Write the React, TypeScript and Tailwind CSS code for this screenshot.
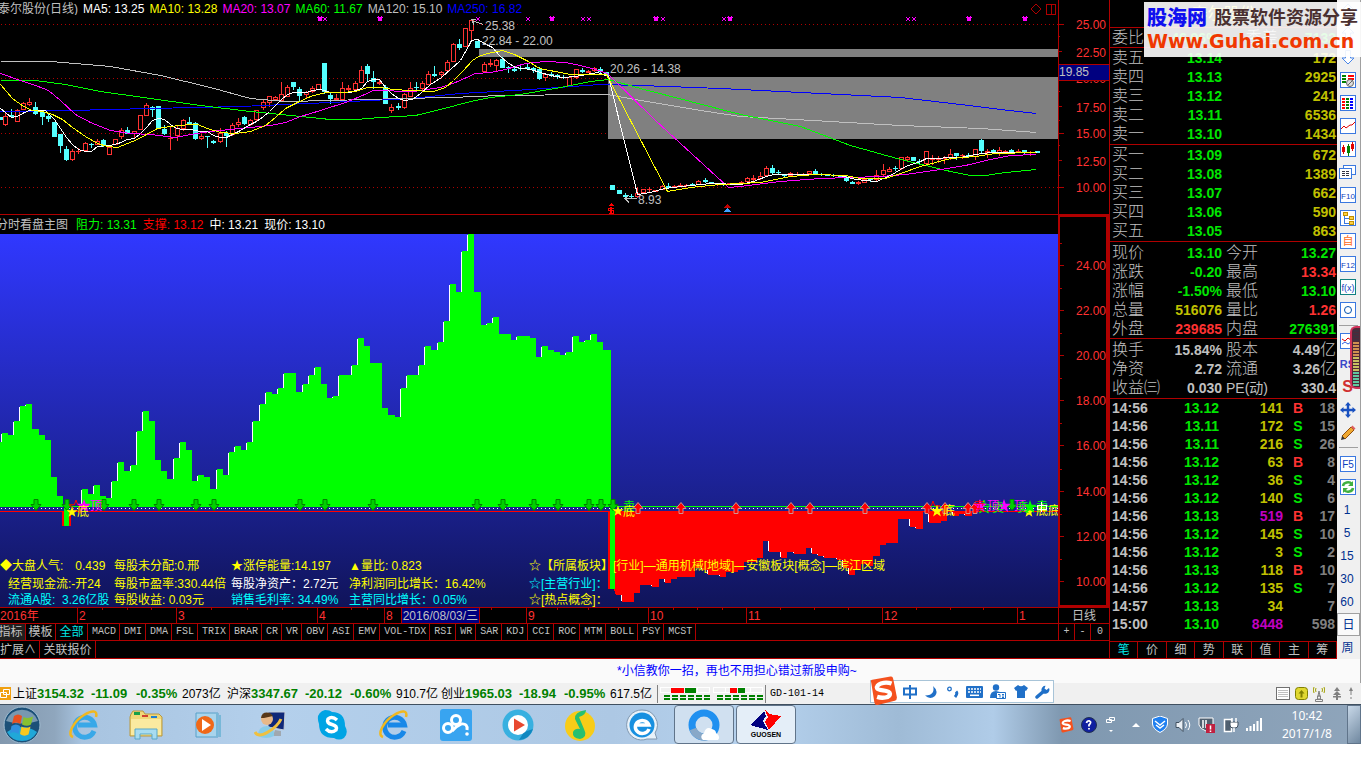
import React, { useState } from 'react';

type Candle = [x: number, up: 0 | 1, top: number, bottom: number, high: number, low: number];

const CANDLES: Candle[] = [
  [0, 0, 117, 120, 117, 120], [5, 1, 116, 125, 113, 126], [11, 0, 115, 117, 109, 118], [17, 1, 110, 122, 109, 122],
  [23, 1, 103, 110, 102, 110], [29, 1, 102, 105, 98, 106], [35, 0, 107, 114, 102, 115], [42, 0, 112, 117, 110, 125],
  [48, 0, 116, 119, 113, 122], [54, 0, 122, 137, 122, 137], [60, 0, 134, 146, 134, 153], [66, 0, 149, 160, 146, 161],
  [72, 1, 151, 160, 149, 161], [78, 1, 151, 152, 148, 154], [85, 1, 143, 151, 142, 151], [91, 0, 144, 145, 143, 148],
  [97, 1, 141, 145, 139, 145], [103, 0, 140, 146, 139, 147], [109, 1, 147, 155, 147, 155], [115, 1, 139, 145, 139, 145],
  [121, 1, 130, 137, 128, 139], [127, 0, 130, 134, 127, 134], [134, 1, 131, 134, 131, 138], [140, 1, 115, 130, 115, 130],
  [146, 1, 105, 116, 103, 116], [152, 0, 107, 110, 106, 117], [158, 0, 106, 129, 106, 129], [164, 0, 129, 134, 125, 135],
  [170, 1, 138, 139, 127, 150], [177, 1, 128, 136, 126, 141], [183, 1, 120, 129, 119, 131], [189, 0, 122, 124, 117, 124],
  [195, 0, 123, 139, 122, 140], [201, 1, 136, 139, 134, 140], [207, 0, 136, 137, 136, 148], [213, 0, 141, 143, 140, 144],
  [220, 1, 133, 142, 128, 143], [226, 0, 133, 136, 131, 147], [232, 1, 125, 135, 123, 136], [238, 1, 122, 125, 118, 127],
  [244, 0, 117, 124, 116, 125], [250, 1, 120, 125, 119, 126], [256, 1, 110, 120, 110, 121], [263, 1, 102, 108, 99, 110],
  [269, 1, 96, 103, 96, 107], [275, 1, 97, 100, 96, 101], [281, 1, 94, 101, 82, 101], [287, 1, 87, 97, 85, 97],
  [293, 0, 82, 87, 82, 90], [299, 0, 89, 96, 87, 101], [306, 1, 92, 95, 91, 98], [312, 1, 88, 92, 86, 93],
  [318, 1, 84, 90, 84, 90], [324, 0, 63, 92, 63, 94], [330, 0, 95, 99, 92, 104], [336, 1, 98, 100, 94, 101],
  [342, 1, 88, 100, 82, 101], [348, 1, 88, 90, 85, 91], [355, 1, 83, 90, 81, 91], [361, 1, 70, 83, 66, 83],
  [367, 0, 66, 74, 64, 82], [373, 0, 78, 82, 71, 89], [379, 1, 82, 84, 79, 85], [385, 0, 87, 104, 85, 104],
  [391, 1, 107, 111, 104, 113], [398, 0, 106, 108, 103, 110], [404, 1, 94, 108, 93, 109], [410, 1, 88, 97, 82, 97],
  [416, 0, 87, 88, 82, 90], [422, 1, 83, 89, 81, 90], [428, 1, 74, 85, 71, 85], [434, 0, 74, 76, 66, 77],
  [441, 1, 72, 75, 71, 77], [447, 1, 62, 71, 60, 71], [453, 1, 44, 62, 43, 62], [459, 0, 44, 48, 39, 50],
  [465, 1, 28, 47, 28, 47], [471, 1, 20, 31, 19, 41], [477, 0, 41, 48, 41, 48], [484, 1, 64, 72, 62, 72],
  [490, 1, 63, 65, 59, 67], [496, 1, 60, 66, 59, 71], [502, 0, 59, 68, 57, 68], [508, 0, 67, 68, 66, 73],
  [514, 0, 69, 71, 66, 72], [520, 0, 68, 69, 66, 71], [527, 0, 67, 69, 64, 70], [533, 0, 68, 70, 67, 73],
  [539, 0, 69, 79, 67, 80], [545, 1, 74, 78, 73, 81], [551, 0, 74, 76, 72, 77], [557, 0, 75, 77, 74, 79],
  [563, 0, 77, 78, 75, 79], [569, 1, 77, 86, 76, 86], [576, 1, 69, 78, 69, 79], [582, 0, 70, 72, 68, 73],
  [588, 1, 71, 73, 70, 73], [594, 1, 68, 71, 67, 72], [600, 0, 69, 72, 67, 73], [606, 0, 72, 76, 72, 76],
  [612, 0, 185, 190, 185, 190], [619, 0, 190, 194, 190, 194], [625, 0, 195, 197, 193, 199], [631, 0, 196, 197, 194, 198],
  [637, 1, 193, 197, 187, 198], [643, 1, 189, 193, 189, 193], [649, 1, 189, 190, 187, 192], [655, 1, 190, 192, 190, 192],
  [662, 1, 186, 190, 185, 190], [668, 0, 186, 188, 183, 189], [674, 1, 186, 187, 185, 188], [680, 1, 185, 187, 183, 187],
  [686, 1, 185, 186, 184, 187], [692, 0, 184, 185, 183, 186], [698, 1, 181, 185, 180, 185], [705, 0, 180, 182, 178, 183],
  [711, 0, 182, 184, 182, 184], [717, 1, 184, 185, 183, 186], [723, 0, 184, 185, 183, 186], [729, 1, 183, 185, 183, 185],
  [735, 1, 183, 184, 183, 185], [741, 1, 182, 183, 181, 184], [747, 1, 178, 182, 177, 182], [753, 1, 178, 180, 175, 181],
  [760, 1, 176, 179, 172, 180], [766, 1, 168, 176, 166, 177], [772, 0, 168, 173, 165, 174], [778, 0, 172, 173, 170, 175],
  [784, 0, 175, 176, 174, 177], [790, 1, 173, 176, 172, 177], [797, 1, 174, 175, 172, 176], [803, 1, 174, 175, 173, 176],
  [809, 1, 171, 174, 171, 175], [815, 0, 171, 174, 169, 174], [821, 0, 174, 175, 173, 176], [827, 0, 175, 176, 174, 176],
  [833, 0, 175, 176, 174, 177], [840, 0, 176, 177, 175, 178], [846, 0, 177, 181, 176, 182], [852, 0, 182, 184, 181, 184],
  [858, 1, 182, 184, 181, 185], [864, 1, 179, 183, 178, 183], [870, 0, 179, 180, 178, 182], [876, 1, 175, 180, 170, 181],
  [883, 1, 170, 175, 164, 176], [889, 1, 169, 172, 167, 172], [895, 0, 168, 169, 166, 171], [901, 1, 157, 169, 157, 170],
  [907, 1, 157, 160, 156, 162], [913, 0, 157, 161, 157, 161], [919, 0, 161, 162, 159, 165], [926, 1, 151, 164, 151, 166],
  [932, 1, 159, 160, 155, 165], [938, 1, 159, 160, 156, 163], [944, 1, 158, 159, 156, 164], [950, 1, 154, 158, 149, 160],
  [956, 0, 153, 156, 153, 160], [962, 1, 155, 156, 154, 159], [968, 0, 155, 156, 153, 158], [975, 1, 149, 157, 149, 160],
  [981, 0, 140, 151, 139, 154], [987, 1, 151, 153, 149, 158], [993, 0, 150, 152, 149, 154], [999, 1, 150, 153, 147, 156],
  [1005, 1, 151, 152, 150, 154], [1011, 0, 150, 152, 149, 153], [1018, 1, 151, 152, 149, 153], [1024, 0, 150, 152, 150, 154],
  [1030, 1, 152, 153, 151, 156], [1037, 0, 151, 153, 151, 153],
];

const MA_LINES = [
  { color: '#0000ff', points: '0,111 70,110 150,108 240,106 330,102 410,98 460,93 530,89 600,84 640,85 720,88 800,92 900,97 960,104 1000,109 1036,113' },
  { color: '#c0c0c0', points: '0,61 50,61 110,66 160,75 210,87 250,98 285,101 330,100 400,98 450,97 500,95 590,94 607,94 640,100 700,110 740,116 830,121 900,125 980,128 1036,132' },
  { color: '#00ff00', points: '0,80 35,80 65,84 100,91 150,98 200,105 250,111 300,116 330,119 355,119 380,117 415,115 440,109 470,101 490,97 520,94 560,87 590,81 608,79 640,88 690,101 740,114 800,126 850,145 900,159 950,171 970,175 985,175 1005,172 1036,169' },
  { color: '#ff00ff', points: '0,73 20,80 35,85 48,90 60,100 75,114 90,122 110,130 130,133 150,134 175,137 190,134 210,131 240,128 270,125 285,122 300,116 320,110 345,102 362,95 373,90 413,91 440,87 455,82 475,73 490,72 505,69 525,63 545,61 565,62 580,65 595,69 607,73 655,120 728,187 740,186 780,181 820,178 880,176 905,174 940,169 965,165 990,159 1010,155 1036,154' },
  { color: '#ffffff', points: '0,108 11,117 17,116 24,112 29,110 45,110 54,119 60,128 66,137 72,144 78,149 85,151 91,151 97,146 109,145 118,143 127,139 134,138 140,133 146,127 152,120 158,118 164,119 170,124 176,128 183,129 190,129 200,131 207,131 213,135 220,137 226,137 232,134 240,130 250,124 256,121 263,116 269,111 275,105 281,99 287,94 293,92 306,92 312,90 320,89 330,92 350,92 361,88 367,81 373,79 379,79 385,87 391,93 398,98 404,100 412,99 420,93 430,84 441,77 450,69 460,60 468,46 471,40 477,39 484,43 492,47 500,56 507,62 515,67 530,69 540,72 550,75 562,77 575,76 586,74 597,72 608,76 618,117 637,194 650,192 664,188 690,185 711,183 740,184 753,181 766,176 773,174 820,174 840,175 855,179 876,181 890,175 905,166 920,161 926,158 960,157 975,154 990,152 1036,152' },
  { color: '#ffff00', points: '0,84 12,98 23,106 32,110 42,111 52,114 62,119 72,127 85,136 97,143 107,146 117,147 127,143 137,139 146,134 157,128 170,126 190,124 197,124 207,128 220,132 235,133 250,131 265,125 275,117 285,108 297,102 310,96 325,92 340,92 355,91 367,87 380,87 393,89 410,90 433,91 445,87 453,80 462,71 472,60 478,56 487,53 502,50 514,54 528,61 539,68 570,74 606,74 667,191 690,187 720,184 760,182 790,176 815,174 845,175 860,178 885,178 900,173 920,166 935,162 950,158 975,156 995,153 1036,152' },
];

const MARKS: [number, 0 | 1][] = [
  [320, 1], [325, 0], [380, 1], [478, 0], [528, 0], [552, 1], [583, 0], [589, 0], [656, 1],
  [663, 0], [724, 0], [730, 1], [908, 0], [914, 0], [969, 1], [1025, 1],
];

// the lower pane shows the same closes on a larger price scale
const SPLIT_X = 611;
const steps = CANDLES.map(([x, up, top, bottom], i) => {
  const close = up ? top : bottom;
  const next = CANDLES[i + 1];
  return {
    from: Math.max(0, x - 3),
    to: next ? next[0] - 3 : x + 3,
    y: Math.round(242.4 + (close - 24) * 2.076),
  };
});

const GREEN_ARROWS = [36, 67, 104, 134, 159, 196, 214, 300, 325, 373, 477, 503, 534, 558, 589, 601, 613, 1012];
const RED_ARROWS = [638, 681, 736, 791, 810, 865, 927, 945, 968, 975];

const INDICATORS = ['MACD', 'DMI', 'DMA', 'FSL', 'TRIX', 'BRAR', 'CR', 'VR', 'OBV', 'ASI', 'EMV', 'VOL-TDX', 'RSI', 'WR', 'SAR', 'KDJ', 'CCI', 'ROC', 'MTM', 'BOLL', 'PSY', 'MCST'];

const SELLS = [['卖五', '13.14', '172'], ['卖四', '13.13', '2925'], ['卖三', '13.12', '241'], ['卖二', '13.11', '6536'], ['卖一', '13.10', '1434']];
const BUYS = [['买一', '13.09', '672'], ['买二', '13.08', '1389'], ['买三', '13.07', '662'], ['买四', '13.06', '590'], ['买五', '13.05', '863']];

const GREEN = 'text-[#00e600]';
const RED = 'text-[#ff3232]';
const GOLD = 'text-[#c0c000]';
const GREY = 'text-[#c0c0c0]';

const QUOTES = [
  ['现价', '13.10', GREEN, '今开', '13.27', GREEN],
  ['涨跌', '-0.20', GREEN, '最高', '13.34', RED],
  ['涨幅', '-1.50%', GREEN, '最低', '13.10', GREEN],
  ['总量', '516076', GOLD, '量比', '1.26', RED],
  ['外盘', '239685', RED, '内盘', '276391', GREEN],
];
const FUNDAMENTALS = [
  ['换手', '15.84%', GREY, '股本', '4.49亿', GREY],
  ['净资', '2.72', GREY, '流通', '3.26亿', GREY],
  ['收益㈢', '0.030', GREY, 'PE(动)', '330.4', GREY],
];
const TICKS = [
  ['14:56', '13.12', '141', 'B', '18'], ['14:56', '13.11', '172', 'S', '15'], ['14:56', '13.11', '216', 'S', '26'],
  ['14:56', '13.12', '63', 'B', '8'], ['14:56', '13.12', '36', 'S', '4'], ['14:56', '13.12', '140', 'S', '6'],
  ['14:56', '13.13', '519', 'B', '17'], ['14:56', '13.12', '145', 'S', '10'], ['14:56', '13.12', '3', 'S', '2'],
  ['14:56', '13.13', '118', 'B', '10'], ['14:56', '13.12', '135', 'S', '7'], ['14:57', '13.13', '34', '', '7'],
  ['15:00', '13.10', '8448', '', '598'],
];

const INDEXES = [
  ['上证', '3154.32', '-11.09', '-0.35%', '2073亿'],
  ['沪深', '3347.67', '-20.12', '-0.60%', '910.7亿'],
  ['创业', '1965.03', '-18.94', '-0.95%', '617.5亿'],
];

const STAR = 'M0 -7 L1.7 -2.2 L7 -2.2 L2.8 1 L4.3 6 L0 3 L-4.3 6 L-2.8 1 L-7 -2.2 L-1.7 -2.2 Z';

const KlineChart: React.FC = () => (
  <svg className="block h-[199px] w-full" viewBox="0 15 1058 199" preserveAspectRatio="xMinYMin slice" shapeRendering="crispEdges">
    <rect x="479" y="49" width="579" height="8" fill="#808080" />
    {[24, 78, 133, 187].map((y) => (
      <line key={y} x1="1" x2="1058" y1={y + 0.5} y2={y + 0.5} stroke="#b00000" strokeDasharray="1 3" />
    ))}
    <rect x="608" y="77" width="450" height="62" fill="#808080" />
    {CANDLES.map(([x, up, top, bottom, high, low]) => (
      <g key={x}>
        <rect x={x} y={high} width="1" height={low - high} fill={up ? '#ff3232' : '#54ffff'} />
        {up && bottom - top > 2 ? (
          <rect x={x - 1.5} y={top + 0.5} width="4" height={bottom - top - 1} fill="#000" stroke="#ff3232" />
        ) : (
          <rect x={x - 2} y={top} width="5" height={bottom - top} fill={up ? '#ff3232' : '#54ffff'} />
        )}
      </g>
    ))}
    {MA_LINES.map((line) => (
      <polyline key={line.color} points={line.points} fill="none" stroke={line.color} transform="translate(.5 .5)" />
    ))}
    {MARKS.map(([x, big]) => (
      <g key={x} stroke="#ff00ff">
        <path d={`M${x - 2} 17 l4 4 M${x + 2} 17 l-4 4`} strokeWidth={big ? 2 : 1} />
      </g>
    ))}
    <g fill="none" stroke="#c0c0c0">
      <path d="M483 24.5 L472 20.5 M476 19.5 h-5 M472 20 l2 5" />
      <path d="M637 198.5 H625.5 M629 195 l-4 3.5 l4 4" />
    </g>
    <g fill="#c0c0c0" className="font-['Liberation_Sans',sans-serif] text-[12px]">
      <text x="485" y="30">25.38</text>
      <text x="482" y="45">22.84 - 22.00</text>
      <text x="610" y="73">20.26 - 14.38</text>
      <text x="638" y="204">8.93</text>
    </g>
    <path d="M611 203 l3 3 h-6 z" fill="#f00" />
    <path d="M613.5 208.500 h-5 v2 h5 v3 h-5 M611 207 v7" fill="none" stroke="#f00" strokeWidth="1.500" />
    <path d="M727.500 204 l4 4 h-8 z" fill="#c00000" />
    <path d="M727.500 208 l4 4 h-8 z" fill="#3fa0ff" />
  </svg>
);

const KlineAxis: React.FC = () => (
  <svg className="block h-[214px] w-[50px]" viewBox="1059 0 50 214" shapeRendering="crispEdges">
    {[24, 51, 106, 133, 160, 187].map((y) => (
      <rect key={y} x="1059" y={y} width={y === 24 || y === 133 || y === 187 ? 5 : 3} height="1" fill="#b00000" />
    ))}
    {[36, 91, 120, 145, 175].map((y) => (
      <rect key={y} x="1059" y={y} width="1" height="1" fill="#b00000" />
    ))}
    <g fill="#ff3232" textAnchor="end" className="font-['Liberation_Sans',sans-serif] text-[12px]">
      <text x="1106" y="29">25.00</text>
      <text x="1106" y="57">22.50</text>
      <text x="1106" y="83">20.00</text>
      <text x="1106" y="112">17.50</text>
      <text x="1106" y="138">15.00</text>
      <text x="1106" y="166">12.50</text>
      <text x="1106" y="192">10.00</text>
    </g>
    <rect x="1059" y="64" width="50" height="17" fill="#b00000" />
    <rect x="1059" y="65" width="50" height="15" fill="#000080" />
    <text x="1059" y="76" fill="#c0c0c0" className="font-['Liberation_Sans',sans-serif] text-[12px]">19.85</text>
  </svg>
);

const ValueChart: React.FC = () => {
  const left = steps.filter((s) => s.to < SPLIT_X);
  const right = steps.filter((s) => s.from > SPLIT_X && s.to < 984);
  const greenTop = left.map((s) => `L${s.from} ${Math.min(s.y, 507)} L${s.to} ${Math.min(s.y, 507)}`).join(' ');
  const redEdge = right.map((s) => `L${s.from} ${Math.max(s.y, 511)} L${s.to} ${Math.max(s.y, 511)}`).join(' ');
  return (
    <svg className="block h-[373px] w-full" viewBox="0 234 1058 373" preserveAspectRatio="xMinYMin slice" shapeRendering="crispEdges">
      <defs>
        <linearGradient id="pane" x1="0" y1="0" x2="0" y2="1">
          <stop offset="0" stopColor="#3038ff" />
          <stop offset=".7" stopColor="#1b2190" />
          <stop offset="1" stopColor="#10145a" />
        </linearGradient>
      </defs>
      <rect y="234" width="1058" height="373" fill="url(#pane)" />
      <path d={`M0 507 ${greenTop} L609 350 H611 V507 Z`} fill="#fff" transform="translate(-1 1)" />
      <path d={`M0 507 ${greenTop} L609 350 H611 V507 Z`} fill="#00ff00" />
      <path d={`M616 511 ${redEdge} L984 511 Z`} fill="#fff" transform="translate(-1 -1)" />
      <path d={`M608 511 V589 H614 ${redEdge} L984 511 Z`} fill="#ff0000" />
      <rect y="507" width="1058" height="4" fill="#1b2190" />
      <rect y="511" width="1058" height="1" fill="#f00" />
      <line x1="1" x2="1058" y1="508.5" y2="508.5" stroke="#fff" strokeDasharray="1 3" />
      <rect x="611" y="506" width="447" height="1" fill="#00ff00" />
      <rect x="610" y="506" width="5" height="83" fill="#00ff00" />
      <rect x="62" y="511" width="9" height="15" fill="#f00" />
      <rect x="64" y="506" width="5" height="20" fill="#00ff00" />
      {GREEN_ARROWS.map((x) => (
        <path key={x} d={`M${x - 2} 499.5 h4 v5 h3 l-5 6 l-5 -6 h3 z`} fill="#00d000" stroke="#008000" shapeRendering="auto" />
      ))}
      {RED_ARROWS.map((x) => (
        <path key={x} d={`M${x - 2} 513.5 h4 v-5 h3 l-5 -6 l-5 6 h3 z`} fill="#f00" stroke="#d09090" shapeRendering="auto" />
      ))}
      <g shapeRendering="auto">
        <path d={STAR} transform="translate(76 507)" fill="none" stroke="#f00" />
        <path d={STAR} transform="translate(84 506)" fill="#f0f" />
        <path d={STAR} transform="translate(72 512) scale(.8)" fill="#ff0" />
        <path d={STAR} transform="translate(618 511) scale(.8)" fill="#ff0" />
        <path d={STAR} transform="translate(933 508)" fill="none" stroke="#f00" />
        <path d={STAR} transform="translate(937 511) scale(.9)" fill="#ff0" />
        <path d={STAR} transform="translate(984 507)" fill="none" stroke="#0f0" />
        <path d={STAR} transform="translate(980 506)" fill="#f0f" />
        <path d={STAR} transform="translate(1004 506)" fill="#f0f" />
        <path d={STAR} transform="translate(1029 512) scale(.8)" fill="#ff0" />
        <path d={STAR} transform="translate(1030 507)" fill="#0f0" />
      </g>
      <g className="font-['Liberation_Sans','Noto_Sans_CJK_SC',sans-serif] text-[12px]">
        <text x="90" y="510" fill="#f0f">顶</text>
        <text x="77" y="516" fill="#ff0">底</text>
        <text x="623" y="511" fill="#0f0">卖</text>
        <text x="623" y="516" fill="#ff0">底</text>
        <text x="943" y="515" fill="#ff0">底</text>
        <text x="973" y="511" fill="#f00">卖</text>
        <text x="992" y="512" fill="#0f0">卖</text>
        <text x="987" y="510" fill="#f0f">顶</text>
        <text x="1014" y="510" fill="#f0f">顶</text>
        <text x="1017" y="512" fill="#0f0">卖</text>
        <text x="1036" y="511" fill="#0f0">卖</text>
        <text x="1036" y="515" fill="#ff0">底</text>
        <text x="1048" y="515" fill="#ff0">底</text>
      </g>
      <path d="M1041.5 502 v10 M1037 505.500 h9 v4 h-9 z" fill="none" stroke="#fff" />
    </svg>
  );
};

const ValueAxis: React.FC = () => (
  <svg className="block h-[388px] w-[46px]" viewBox="1061 217 46 388" shapeRendering="crispEdges">
    {[24, 22, 20, 18, 16, 14, 12, 10].map((v, i) => {
      const y = Math.round(265 + i * 45.1);
      return (
        <g key={v} fill="#ff3232">
          <rect x="1061" y={y} width="4" height="1" fill="#b00000" />
          <rect x="1061" y={y - 22} width="2" height="1" fill="#b00000" />
          <text x="1107" y={y + 5} textAnchor="end" className="font-['Liberation_Sans',sans-serif] text-[12px]">{v}.00</text>
        </g>
      );
    })}
  </svg>
);

const MONTHS = ['2016年', '2', '3', '4', '8', '9', '10', '11', '12', '1'];
const MINOR = [102, 127, 151, 211, 247, 282, 351, 367, 491, 557, 588, 618, 673, 697, 722, 780, 814, 848, 916, 950, 983];

const ChartColumn: React.FC = () => (
  <section className="flex min-w-0 flex-1 flex-col text-[12px] leading-[12px]">
    <div className="flex h-[215px] border-b border-[#b00000]">
      <div className="min-w-0 flex-1 overflow-hidden">
        <div className="flex h-[15px] items-start gap-[5px] overflow-hidden whitespace-nowrap pt-[3px]">
          <span className="-ml-[2px] text-[#c0c0c0]">泰尔股份(日线)</span>
          <span className="text-white">MA5: 13.25</span>
          <span className="text-[#ffff00]">MA10: 13.28</span>
          <span className="text-[#ff00ff]">MA20: 13.07</span>
          <span className="text-[#00ff00]">MA60: 11.67</span>
          <span className="text-[#c0c0c0]">MA120: 15.10</span>
          <span className="text-[#0000ff]">MA250: 16.82</span>
          <svg className="ml-auto mr-[2px] h-[12px] w-[26px]" viewBox="0 0 26 12" fill="none" stroke="#b00000">
            <path d="M6 1 l5 5 l-5 5 l-5 -5 z" />
            <path d="M16.500 1.500 h9 v10 h-9 z M21.500 1.500 v10" shapeRendering="crispEdges" />
          </svg>
        </div>
        <KlineChart />
      </div>
      <div className="w-[51px] border-l border-[#b00000]"><KlineAxis /></div>
    </div>

    <div className="flex h-[392px]">
      <div className="relative min-w-0 flex-1 overflow-hidden">
        <div className="flex h-[19px] items-center gap-[6px] whitespace-nowrap">
          <span className="-ml-[4px] mr-[2px] text-[#c0c0c0]">分时看盘主图</span>
          <span className="text-[#00ff00]">阻力: 13.31</span>
          <span className="text-[#ff0000]">支撑: 13.12</span>
          <span className="text-white">中: 13.21</span>
          <span className="text-white">现价: 13.10</span>
        </div>
        <ValueChart />
        <div className="absolute bottom-0 left-0 grid w-full grid-cols-[114px_117px_118px_180px_1fr] grid-rows-[19px_18px_14px] items-center whitespace-nowrap text-[#ffff00]">
          <span className="flex gap-[12px]"><span>◆大盘人气:</span><span>0.439</span></span>
          <span>每股未分配:0.邢</span>
          <span>★涨停能量:14.197</span>
          <span>▲量比: 0.823</span>
          <span>☆【所属板块】[行业]—通用机械[地域]—安徽板块[概念]—皖江区域</span>
          <span className="pl-2">经营现金流:-开24</span>
          <span>每股市盈率:330.44倍</span>
          <span className="text-white">每股净资产：2.72元</span>
          <span>净利润同比增长：16.42%</span>
          <span className="text-[#00ffff]">☆[主营行业]：</span>
          <span className="pl-2 text-[#00ffff]">流通A股:&nbsp; 3.26亿股</span>
          <span>每股收益: 0.03元</span>
          <span className="text-[#00ffff]">销售毛利率: 34.49%</span>
          <span className="text-[#00ffff]">主营同比增长：0.05%</span>
          <span>☆[热点概念]：</span>
        </div>
      </div>
      <div className="w-[51px] border-2 border-r-[3px] border-[#b00000]"><ValueAxis /></div>
    </div>

    <div className="flex h-[16px] border-t border-[#b00000]">
      <div className="relative grid min-w-0 flex-1 grid-cols-[77fr_99fr_141fr_67fr_142fr_122fr_98fr_136fr_135fr_41fr] overflow-hidden">
        {MONTHS.map((m, i) => (
          <div key={m} className={`flex items-center text-[#ff3232] ${i ? 'border-l border-[#b00000] pl-px' : ''}`}>
            {m}
            {m === '8' && (
              <span className="ml-[8px] flex h-full items-center whitespace-nowrap border-x border-[#b00000] bg-[#000080] px-px text-[#c0c0c0]">2016/08/03/三</span>
            )}
          </div>
        ))}
        <svg className="pointer-events-none absolute inset-x-0 top-0 h-[2px] w-full" viewBox="0 0 1058 2" preserveAspectRatio="xMinYMin slice">
          {MINOR.map((x) => <rect key={x} x={x} width="1" height="2" fill="#b00000" />)}
        </svg>
      </div>
      <div className="flex w-[51px] items-center justify-center border-l border-[#b00000] text-[#c0c0c0]">日线</div>
    </div>

    <div className="flex h-[17px] border-t border-[#b00000] text-[#c0c0c0]">
      <div className="flex min-w-0 flex-1 overflow-hidden">
        <button className="w-[26px] border-r border-[#b00000] bg-[#202020]"><span className="-ml-[4px]">指标</span></button>
        <button className="w-[30px] border-r border-[#b00000]">模板</button>
        <button className="w-[32px] border-r border-[#b00000] text-[#00e6e6]">全部</button>
        {INDICATORS.map((name) => (
          <button key={name} className="border-r border-[#b00000] pl-[4px] pr-[3px] font-['Liberation_Mono',monospace] text-[10px]">{name}</button>
        ))}
      </div>
      <div className="flex w-[51px] border-l border-[#b00000] font-['Liberation_Mono',monospace] text-[10px]">
        <button className="w-[16px] border-r border-[#b00000]">+</button>
        <button className="w-[16px] border-r border-[#b00000]">-</button>
        <button className="flex-1">0</button>
      </div>
    </div>

    <div className="flex h-[19px] border-y border-[#b00000] text-[#c0c0c0]">
      <button className="w-[40px] border-r border-[#b00000] text-left">扩展∧</button>
      <button className="w-[56px] border-r border-[#b00000]">关联报价</button>
    </div>
  </section>
);

const OrderRows: React.FC<{ rows: string[][] }> = ({ rows }) => (
  <table className="w-full table-fixed border-separate border-spacing-0 border-b border-[#b00000] pt-px">
    <tbody>
      {rows.map(([label, price, volume]) => (
        <tr key={label} className="h-[19px] align-top">
          <td className="w-[64px] p-0 pl-[2px] text-[16px] font-light text-[#c0c0c0]">{label}</td>
          <td className="w-[48px] p-0 text-right font-bold text-[#00e600]">{price}</td>
          <td className="p-0 pr-px text-right font-bold text-[#c0c000]">{volume}</td>
        </tr>
      ))}
    </tbody>
  </table>
);

const PairRows: React.FC<{ rows: string[][]; tail?: boolean }> = ({ rows, tail }) => (
  <div className={`border-b border-[#b00000] pt-px ${tail ? 'pb-px' : ''}`}>
    {rows.map(([a, av, ac, b, bv, bc]) => (
      <div key={a} className="grid h-[19px] grid-cols-[112px_1fr] items-center whitespace-nowrap">
        <span className="flex items-center justify-between pl-[2px]">
          <span className="text-[16px] font-light text-[#c0c0c0]">{a}</span>
          <b className={ac}>{av}</b>
        </span>
        <span className="flex items-center justify-between pl-[4px] pr-px">
          <span className={b.startsWith('PE') ? 'text-[14px] text-[#c0c0c0]' : 'text-[16px] font-light text-[#c0c0c0]'}>{b}</span>
          {bv.endsWith('亿') ? (
            <span className={bc}><b>{bv.slice(0, -1)}</b><span className="text-[16px] font-light">亿</span></span>
          ) : (
            <b className={bc}>{bv}</b>
          )}
        </span>
      </div>
    ))}
  </div>
);

const QuotePanel: React.FC = () => {
  const [tab, setTab] = useState('笔');
  return (
    <section className="flex w-[228px] flex-col border-l border-[#b00000] text-[14px] leading-[18px]">
      <div className="flex h-[28px] items-center justify-center border-b border-[#b00000] text-[16px] text-[#ffff00]">泰尔股份</div>
      <div className="flex h-[20px] items-center justify-between border-b border-[#b00000] pl-[2px] pr-px">
        <span className="text-[16px] font-light text-[#c0c0c0]">委比</span>
        <b className="text-[#00e600]">46.96%</b>
        <span className="text-[16px] font-light text-[#c0c0c0]">委差</span>
        <b className="text-[#00e600]">7132</b>
      </div>
      <OrderRows rows={SELLS} />
      <OrderRows rows={BUYS} />
      <PairRows rows={QUOTES} />
      <PairRows rows={FUNDAMENTALS} tail />
      <table className="w-full table-fixed">
        <tbody>
          {TICKS.map(([time, price, volume, side, count], i) => (
            <tr key={i} className="h-[18px] font-bold">
              <td className="w-[64px] p-0 pl-[2px] text-[#c0c0c0]">{time}</td>
              <td className="w-[45px] p-0 text-right text-[#00e600]">{price}</td>
              <td className={`w-[64px] p-0 text-right ${volume === '519' || volume === '8448' ? 'text-[#c000c0]' : 'text-[#c0c000]'}`}>{volume}</td>
              <td className={`w-[24px] p-0 pl-[6px] text-center ${side === 'B' ? 'text-[#ff3232]' : 'text-[#00e600]'}`}>{side}</td>
              <td className="p-0 pr-[2px] text-right text-[#808080]">{count}</td>
            </tr>
          ))}
        </tbody>
      </table>
      <div className="mt-auto grid h-[18px] grid-cols-8 border-y border-[#b00000] text-[12px] leading-[16px] text-[#c0c0c0]">
        {['笔', '价', '细', '势', '联', '值', '主', '筹'].map((t) => (
          <button key={t} onClick={() => setTab(t)} className={`border-r border-[#b00000] ${t === tab ? 'text-[#00e6e6]' : ''}`}>{t}</button>
        ))}
      </div>
    </section>
  );
};

const Box: React.FC<{ children: React.ReactNode; color?: string }> = ({ children, color = '#3a78e0' }) => (
  <svg width="16" height="16" viewBox="0 0 16 16" fill="none" shapeRendering="crispEdges">
    <rect x=".5" y=".5" width="15" height="15" fill="#fff" stroke={color} />
    {children}
  </svg>
);

const boxText = (label: string, fill = '#1040c0', size = 10) => (
  <text x="8" y="12" fontSize={size} textAnchor="middle" fill={fill} className="font-['Liberation_Sans','Noto_Sans_CJK_SC',sans-serif]">{label}</text>
);

const rowsPath = (x: number) => `M${x} 3.500h3 M${x} 6.500h3 M${x} 9.500h3 M${x} 12.500h3`;

const TOOLS: [string, React.ReactNode][] = [
  ['上一', <svg key="u" width="14" height="16" viewBox="0 0 14 16" fill="#fff" stroke="#4a86e8"><path d="M7 1 L13 7 H9.500 V14.500 H4.500 V7 H1 Z" /></svg>],
  ['上翻', <svg key="v" width="14" height="16" viewBox="0 0 14 16" fill="#fff" stroke="#4a86e8"><path d="M7 1 L13 7 H9.500 V14.500 H4.500 V7 H1 Z" /></svg>],
  ['下翻', <svg key="d" width="14" height="16" viewBox="0 0 14 16" fill="#fff" stroke="#4a86e8"><path d="M7 15 L1 9 H4.500 V1.500 H9.500 V9 H13 Z" /></svg>],
  ['撤单', <Box key="a"><path d="M2 3.500h4 M2 6.500h4 M2 9.500h4" stroke="#008000" strokeWidth="2" /><path d="M8 3.500h6 M8 6.500h6" stroke="#f00" strokeWidth="2" /><circle cx="10" cy="11" r="3.500" fill="#ddd" stroke="#666" shapeRendering="auto" /><path d="M8 13 l5-5" stroke="#666" shapeRendering="auto" /></Box>],
  ['报价', <Box key="b"><path d={rowsPath(2)} stroke="#f00" strokeWidth="2" /><path d={rowsPath(6)} stroke="#008000" strokeWidth="2" /><path d={rowsPath(10)} stroke="#00f" strokeWidth="2" /></Box>],
  ['分时', <Box key="c"><path d="M1 11 l3-3 l2 2 l4-3 l2 0 l3-3" stroke="#e00000" shapeRendering="auto" /></Box>],
  ['K线', <Box key="e"><path d="M3.500 4v9 M12.500 1v9" stroke="#e00000" /><path d="M8.500 3v12" stroke="#008000" /><path d="M2 6h3v5h-3z M11 3h3v5h-3z" fill="#e00000" /><path d="M7 5h3v7h-3z" fill="#008000" /></Box>],
  ['资讯', <svg key="f" width="17" height="16" viewBox="0 0 17 16" fill="#fff" stroke="#3a78e0" shapeRendering="crispEdges"><rect x="4.500" y="1.500" width="12" height="9" /><rect x=".5" y="4.500" width="12" height="10" /><path d="M3 7.500h3 M7 7.500h3 M3 9.500h3 M7 9.500h3 M3 11.500h3 M7 11.500h3" stroke="#334" /></svg>],
  ['F10', <Box key="g">{boxText('F10', '#1040c0', 8)}</Box>],
  ['板块', <Box key="h"><path d="M4.500 5v8h5 M4.500 8.500h5" stroke="#3a78e0" /><path d="M3 2h4v3h-4z M9 6h4v3h-4z M9 11h4v3h-4z" fill="#ffd040" stroke="#c09000" /></Box>],
  ['自选', <Box key="i">{boxText('自', '#ff6a20', 11)}</Box>],
  ['F12', <Box key="j">{boxText('F12', '#1040c0', 8)}</Box>],
  ['公式', <Box key="k" color="#108080">{boxText('f(x)', '#1040c0', 9)}</Box>],
  ['圆', <Box key="l"><circle cx="8" cy="8" r="3.500" stroke="#0050b0" shapeRendering="auto" /></Box>],
  ['-', null],
  ['叠加', <Box key="m"><path d="M2 6 l3 2 l3-3 l3 2 l3-3" stroke="#e00000" shapeRendering="auto" /><path d="M2 11 l3-2 l3 2 l3-2 l3 2" stroke="#3060e0" shapeRendering="auto" /></Box>],
  ['RS', <b key="n" className="text-[11px] text-[#3a48c8]">RS</b>],
  ['S', <b key="o" className="text-[16px] text-[#d03030]">S</b>],
  ['移动', <svg key="p" width="16" height="16" viewBox="0 0 16 16" fill="#1850c0"><path d="M8 0l3 3.500H9.200V6.800h3.300V5L16 8l-3.500 3V9.200H9.200v3.300H11L8 16l-3-3.500h1.800V9.200H3.500V11L0 8l3.500-3v1.800h3.300V3.500H5z" /></svg>],
  ['画线', <svg key="q" width="16" height="16" viewBox="0 0 16 16"><path d="M2 11 L11 2 L14 5 L5 14 Z" fill="#f0a830" stroke="#905010" /><path d="M2 11 L1 15 L5 14 Z" fill="#333" /><path d="M11 2l1.500-1.500l3 3L14 5z" fill="#e06060" /></svg>],
  ['-', null],
  ['F5', <Box key="r">{boxText('F5', '#1040c0', 10)}</Box>],
  ['刷新', <Box key="s"><path d="M3 7 a5 4 0 0 1 9-2 M13 9 a5 4 0 0 1-9 2" stroke="#40b040" strokeWidth="2.500" shapeRendering="auto" /><path d="M13 2v5h-5z M3 14v-5h5z" fill="#40b040" shapeRendering="auto" /></Box>],
];

const Toolbar: React.FC = () => (
  <aside className="relative flex w-[24px] flex-col border-r border-[#a0a0a0] bg-[#f0f0f0] text-[12px] text-[#003090]">
    {TOOLS.map(([label, icon], i) =>
      label === '-' ? (
        <hr key={i} className="mx-[2px] mb-[4px] mt-[3px] border-[#a0a0a0]" />
      ) : (
        <button key={i} aria-label={label} className="flex h-[23px] items-center justify-center pr-[2px]">{icon}</button>
      ),
    )}
    {['1', '5', '15', '30', '60'].map((n) => (
      <button key={n} className="h-[23px] pr-[3px]">{n}</button>
    ))}
    <button className="h-[23px] border border-[#a0a0a0] bg-[#fafafa]">日</button>
    <button className="h-[23px] pr-[2px]">周</button>
    {/* floating level meter */}
    <div className="absolute right-0 top-[326px] flex h-[63px] w-[10px] flex-col justify-center gap-px rounded-l-md border-2 border-r-0 border-[#d03058] bg-[#502838] px-px">
      {Array.from({ length: 19 }, (_, i) => (
        <i key={i} className={`h-[2px] ${i < 4 ? 'bg-[#403040]' : i < 9 ? 'bg-[#d09050]' : i < 14 ? 'bg-[#c8c060]' : 'bg-[#60c8a0]'}`} />
      ))}
    </div>
  </aside>
);

const SogouLogo: React.FC<{ size: number }> = ({ size }) => (
  <svg width={size} height={size} viewBox="0 0 28 28">
    <path d="M3 6 Q2 4 4 3.500 L21 .5 Q23 0 23.500 2.500 L27 20 Q27 22.500 25 23 L9 27 Q6.500 27.500 6 25 Z" fill="#f4511e" />
    <path d="M22 7 C15 4.500 7 8 8.500 11.500 C10 14.500 20 12 20.500 16.500 C20.500 20.500 13 21 8.500 19.500" fill="none" stroke="#fff" strokeWidth="4" />
  </svg>
);

const ImeBar: React.FC = () => (
  <div className="absolute -top-[3px] left-[870px] z-10 flex h-[23px] w-[184px] items-center justify-between border border-[#a8c4d8] bg-white pl-[32px] pr-[3px] text-[#2070c8]">
    <span className="absolute -left-[3px] -top-[5px]"><SogouLogo size={30} /></span>
    <svg width="14" height="14" viewBox="0 0 14 14" fill="none" stroke="currentColor" strokeWidth="2"><path d="M7 0v14 M1 3.500h12v6H1z" /></svg>
    <svg width="14" height="14" viewBox="0 0 14 14" fill="currentColor"><path d="M9 1 Q15 6 11 11 Q6 15 1 10.500 Q7 10.500 9 7 Q10 4 9 1z" /></svg>
    <svg width="13" height="14" viewBox="0 0 13 14" fill="none" stroke="currentColor"><circle cx="3.500" cy="4" r="1.800" strokeWidth="1.300" /><path d="M10 6.500 q2 2 -1 5.500" strokeWidth="3" /></svg>
    <svg width="17" height="12" viewBox="0 0 17 12"><rect width="17" height="12" rx="1" fill="currentColor" /><path d="M2 3h13 M2 6h13" stroke="#fff" strokeDasharray="2 1" strokeWidth="1.500" /><path d="M4 9.300h9" stroke="#fff" strokeWidth="1.500" /></svg>
    <svg width="16" height="15" viewBox="0 0 16 15"><circle cx="6" cy="3.500" r="3.200" fill="currentColor" /><path d="M0 14 Q0 7 6 7 L10 8 V14z" fill="currentColor" /><path d="M6.500 8.500h9v6h-9z" fill="#fff" stroke="currentColor" /><path d="M8 10.500h2v3 M12 10.500h2 M12 12h2 M12 13.500h2" stroke="currentColor" fill="none" /></svg>
    <svg width="14" height="13" viewBox="0 0 14 13" fill="currentColor"><path d="M4 0 Q7 2.500 10 0 L14 3 L12 6 L11 5.500 V13 H3 V5.500 L2 6 L0 3z" /></svg>
    <svg width="15" height="14" viewBox="0 0 15 14"><path d="M2 12 L9 6" stroke="currentColor" strokeWidth="3.500" strokeLinecap="round" /><path d="M14 3 A4 4 0 1 1 10.500 .8 L9.500 3.500 L11.500 5z" fill="currentColor" /></svg>
  </div>
);

const Meter: React.FC<{ red: [number, number]; green: [number, number] }> = ({ red, green }) => (
  <svg width="50" height="14" viewBox="0 0 50 14" shapeRendering="crispEdges">
    <path d="M.5 .5h49v5h-49z M12.500 .5v5 M37.500 .5v5" fill="none" stroke="#fff" />
    <rect x={red[0]} y="1" width={red[1]} height="5" fill="#f00" />
    <rect x={green[0]} y="1" width={green[1]} height="5" fill="#008000" />
    <path d="M4 9h46 M4 12h46" stroke="#008000" strokeWidth="2" strokeDasharray="6 2" />
  </svg>
);

const IndexBar: React.FC = () => (
  <div className="relative flex h-[21px] items-center bg-[#f0f0f0] text-[12px] leading-[14px] text-black">
    <svg className="mr-[2px] shrink-0" width="11" height="13" viewBox="0 0 11 13">
      <rect width="11" height="13" fill="#f0a010" />
      <path d="M3.500 2.500h6v5h-6z M.5 5.500h6v5h-6z" fill="none" stroke="#fff" />
    </svg>
    {INDEXES.map(([name, price, change, pct, volume]) => (
      <div key={name} className="grid shrink-0 grid-cols-[24px_54px_45px_46px_45px] items-center whitespace-nowrap">
        <span>{name}</span>
        <b className="text-[13px] text-[#008000]">{price}</b>
        <b className="text-[13px] text-[#008000]">{change}</b>
        <b className="text-[13px] text-[#008000]">{pct}</b>
        <span>{volume}</span>
      </div>
    ))}
    <div className="ml-[2px] flex h-[18px] shrink-0 items-center gap-[3px] border-x border-[#808080] px-[2px]">
      <Meter red={[11, 13]} green={[25, 11]} />
      <Meter red={[17, 7]} green={[25, 7]} />
    </div>
    <span className="ml-[4px] font-['Liberation_Mono',monospace] text-[10px]">GD-101-14</span>
    <ImeBar />
    <div className="ml-auto flex items-center gap-[5px] pr-[8px]">
      <svg width="14" height="13" viewBox="0 0 14 13" shapeRendering="crispEdges"><path d="M.5 .5h13v12H.5z" fill="#fff" stroke="#707070" /><path d="M2 3.500h10 M2 5.500h10 M2 7.500h10 M2 9.500h10" stroke="#c0c0c0" /></svg>
      <svg width="13" height="13" viewBox="0 0 13 13"><rect x=".5" y=".5" width="12" height="12" rx="3" fill="#e0d830" stroke="#808000" /><path d="M6.500 3l3 3.500H7.500v4h-2v-4H3.500z" fill="#808000" /></svg>
      <svg width="12" height="16" viewBox="0 0 12 16" fill="none" stroke="#808080"><path d="M6 5l-1 5h2z M4.500 10h3v3h-3z M2.500 13.500h7v2h-7z" /><path d="M3 2q-1 2 0 4 M1 1q-1.500 3 0 6 M9 2q1 2 0 4 M11 1q1.500 3 0 6" stroke="#a0a000" /></svg>
      <svg className="ml-[3px] mr-[3px]" width="8" height="13" viewBox="0 0 8 13" fill="#808080"><path d="M4 0l3 4H1z M4 4l4 4H0z M0 9h8v1.500H0z M3 8h2v5H3z" /></svg>
      <svg width="4" height="13" viewBox="0 0 4 13" fill="#808080"><path d="M2 0l2 4H0z M1.500 4h1v4h-1z M1.500 10h1v2h-1z" /></svg>
    </div>
  </div>
);

const IeIcon: React.FC<{ tone: string }> = ({ tone }) => (
  <svg width="32" height="32" viewBox="0 0 32 32" fill="none">
    <path d="M26 22 A10 10 0 1 1 26.500 16 H10" stroke={tone} strokeWidth="5" />
    <path d="M5 28 C-2 26 6 12 16 6 C24 1 30 1 28 8" stroke="#f0b820" strokeWidth="2.500" />
  </svg>
);

const APPS: [string, React.ReactNode][] = [
  ['Internet Explorer', <IeIcon key="a" tone="#38a8e8" />],
  ['Explorer', <svg key="b" width="34" height="32" viewBox="0 0 34 32"><path d="M2 5 L4 2 H14 L16 5 H30 L33 8 V27 H1 V8z" fill="#f0d878" stroke="#b89840" /><path d="M5 3h6v3H5z" fill="#18a048" /><path d="M13 6h6v2h-6z" fill="#d04030" /><path d="M22 7h6v2h-6z" fill="#2080d0" /><path d="M2 10h30v16H2z" fill="#faeaa0" /><path d="M6 20 H28 V30 H23 V25 H11 V30 H6z" fill="#a8dcf0" stroke="#58a8c8" /></svg>],
  ['Media Player', <svg key="c" width="30" height="28" viewBox="0 0 30 28"><path d="M3 2h22v24H3z" fill="#a8d4ec" stroke="#58a0c8" /><path d="M23 2h2v24h-2z M26 4h2v22h-2z" fill="#78b8d8" /><circle cx="12" cy="14" r="9" fill="#f06818" /><path d="M9 8l9 6l-9 6z" fill="#fff" /></svg>],
  ['Remote', <svg key="d" width="32" height="30" viewBox="0 0 32 30"><path d="M14 2 L31 2 L30 20 L14 17z" fill="#102878" stroke="#c8d0d8" /><path d="M21 20l6 1v5h-8z" fill="#a0a8b0" /><circle cx="13" cy="9" r="6" fill="#e8b888" /><path d="M7 8Q8 1 16 3l3 3-9 2z" fill="#583818" /><path d="M4 26 Q4 16 13 16 Q21 17 20 26 Q12 30 4 26z" fill="#88cce8" /><path d="M1 22 Q4 28 14 22 T27 9" fill="none" stroke="#f0c040" strokeWidth="3" /></svg>],
  ['Skype', <svg key="e" width="32" height="32" viewBox="0 0 32 32"><path d="M9 1 Q14 1 16 3 Q29 3 29 17 Q33 24 28 29 Q23 32 18 29 Q3 29 3 15 Q-1 4 9 1z" fill="#00a4e4" /><path d="M21 11 Q16 6.500 12 10 Q10 14 16 15.500 Q22 17 20 21 Q15 25 10 20" fill="none" stroke="#fff" strokeWidth="3.500" /></svg>],
  ['Internet Explorer 2', <IeIcon key="f" tone="#1888e8" />],
  ['Netdisk', <svg key="g" width="32" height="32" viewBox="0 0 32 32"><rect width="32" height="32" rx="3" fill="#38a4f0" /><g fill="none" stroke="#fff" strokeWidth="3"><circle cx="8" cy="19" r="4.500" /><circle cx="16" cy="11" r="4.500" /><path d="M12 22 Q16 17 21 15 Q28 14 27 21" /></g><circle cx="27" cy="25" r="1.800" fill="#fff" /></svg>],
  ['Video', <svg key="h" width="32" height="32" viewBox="0 0 32 32"><circle cx="16" cy="16" r="15.500" fill="#38b0e0" /><path d="M22 23 L31 20 Q28 30 17 31z" fill="#1088c0" /><circle cx="16" cy="16" r="10" fill="#fff" /><path d="M12 9.500l11 6.500l-11 6.500z" fill="#e84830" /></svg>],
  ['Music', <svg key="i" width="32" height="32" viewBox="0 0 32 32"><circle cx="16" cy="17" r="15" fill="#f8cc18" /><path d="M22 1 Q22 6 15 8 L20 20 Q24 28 16 30 Q8 29 9 23 Q11 19 16 20 L11 10 Q10 3 22 1z" fill="#28c070" /></svg>],
  ['Browser', <svg key="j" width="32" height="32" viewBox="0 0 32 32"><path d="M16 1 A15 15 0 1 0 21 30 H31 L29 24 A15 15 0 0 0 16 1z" fill="#e8f2fa" stroke="#8098b0" /><circle cx="16" cy="16" r="12.500" fill="#1890e0" /><path d="M23 20 A7 6.500 0 1 1 23 16 H10" fill="none" stroke="#fff" strokeWidth="3.500" /></svg>],
];

const Taskbar: React.FC = () => (
  <footer className="flex h-[40px] items-center border-t border-[#405060] bg-[linear-gradient(90deg,#8298ae_0,#8fa6bd_4%,#a8c4e0_6%,#b4d0ec_20%,#adc8e4_45%,#b6d2ee_56%,#9fbbd6_66%,#b0cce8_73%,#7f98b0_78%,#8fa5bb_100%)]">
    <button aria-label="Start" className="flex w-[53px] items-center pl-[3px]">
      <svg width="38" height="38" viewBox="0 0 38 38">
        <circle cx="19" cy="19" r="18" fill="#1c5078" stroke="#a0bcd0" />
        <path d="M4 26 A17 17 0 0 0 34 26 Q19 16 4 26z" fill="#20a8d8" />
        <path d="M3 15 A17 17 0 0 1 35 15 Q19 20 3 15z" fill="#7898b0" />
        <path d="M11 10 Q15 7 19 10 L17.500 18 Q13 15 9 18z" fill="#e85020" />
        <path d="M20.500 11 Q25 13 30 10.500 L28 18.500 Q24 21 19 18.500z" fill="#88c030" />
        <path d="M8.500 20 Q13 17 17 20 L15.500 28 Q11 25 7 27.500z" fill="#3090e0" />
        <path d="M18.500 20.500 Q23 23 27.500 20.500 L25.500 28.500 Q21 31 17 28z" fill="#f8c820" />
      </svg>
    </button>
    {APPS.map(([name, icon]) => (
      <button key={name} aria-label={name} className="flex w-[62px] items-center justify-center">{icon}</button>
    ))}
    <button aria-label="Cloud" className="ml-px flex h-[39px] w-[60px] items-center justify-center rounded-sm border border-[#60748a] bg-[#d0e0f0]">
      <svg width="32" height="32" viewBox="0 0 32 32">
        <circle cx="16" cy="16" r="12" fill="none" stroke="#2090f0" strokeWidth="7" />
        <path d="M5 20 A12 12 0 0 0 18 28" fill="none" stroke="#88a8c8" strokeWidth="7" />
        <path d="M15 31 Q11 27 16 24 Q18 17 24 20 Q28 21 28 24 Q33 27 30 31z" fill="#fff" />
      </svg>
    </button>
    <button className="ml-[2px] flex h-[39px] w-[60px] flex-col items-center justify-center rounded-sm border border-[#60748a] bg-[#e4eef8] font-['Liberation_Sans',sans-serif] text-[7px] font-bold leading-[8px] text-black">
      <svg width="32" height="21" viewBox="0 0 32 21" shapeRendering="crispEdges">
        <path d="M14 1 L16 6 L13 11 L18 20 L0 15z" fill="#000080" />
        <path d="M15 0 L19 4 L31 6 L19 20 L15 12 L18 7z" fill="#f00" />
      </svg>
      GUOSEN
    </button>
    <div className="ml-auto flex h-full items-center gap-[7px] text-white">
      <SogouLogo size={16} />
      <svg width="16" height="16" viewBox="0 0 16 16"><circle cx="8" cy="8" r="7.500" fill="#1020a0" stroke="#203050" /><path d="M5.500 6 Q6 3.500 8.500 4 Q11 5 8 8 V9.500 M8 11v1.500" fill="none" stroke="#fff" strokeWidth="1.800" /></svg>
      <svg className="ml-[2px]" width="10" height="18" viewBox="0 0 10 18" fill="none" stroke="#fff"><path d="M3.500 1.500h5v3h-5z M.5 3.500h5v3h-5z" /><path d="M3 14h4l-2 2z" fill="#fff" stroke="none" /></svg>
      <svg className="ml-[8px] mr-[4px]" width="10" height="6" viewBox="0 0 10 6"><path d="M5 1l4 4H1z" fill="#fff" /></svg>
      <svg width="16" height="17" viewBox="0 0 16 17"><path d="M8 0 L15.500 2.500 V8 Q15 13 8 16.500 Q1 13 .5 8 V2.500z" fill="#2080f0" stroke="#fff" /><path d="M3 5l5 4l5-4 M4 9l4 3l4-3" fill="none" stroke="#fff" strokeWidth="1.500" /></svg>
      <svg width="16" height="16" viewBox="0 0 16 16" fill="none" stroke="#fff"><path d="M1 5.500h3l4-4v13l-4-4H1z" fill="#e8eef4" stroke="#405060" /><path d="M10.500 5q2 3 0 6 M13 3q3.500 5 0 10" /></svg>
      <svg width="18" height="17" viewBox="0 0 18 17"><path d="M1 2h14v7q-2 5-7 6q-6-2-7-6z" fill="#506070" stroke="#fff" /><path d="M5 4v8 M8 4v8" stroke="#fff" strokeWidth="1.500" /><path d="M8 8h9v9H8z" fill="#c02040" /><path d="M12.500 9.500v4 M12.500 14.500v1.500" stroke="#fff" strokeWidth="1.500" /></svg>
      <svg width="16" height="16" viewBox="0 0 16 16"><path d="M1.500 2.500h7v12h-7z" fill="#506070" stroke="#fff" strokeWidth="1.500" /><path d="M7 5h8v3q0 3-3 3H10q-3 0-3-3z" fill="#fff" stroke="#405060" /><path d="M9 1v4 M13 1v4 M11 11v4" stroke="#fff" strokeWidth="1.500" /></svg>
      <svg width="17" height="13" viewBox="0 0 17 13" fill="#fff"><path d="M0 10h2v3H0z M3.500 8h2v5h-2z M7 6h2v7H7z M10.500 3h2v10h-2z M14 0h2v13h-2z" /></svg>
      <div className="ml-[12px] mr-[8px] text-center font-['Noto_Sans',sans-serif] text-[12px] leading-[18px]">
        <div>10:42</div>
        <div>2017/1/8</div>
      </div>
      <button aria-label="Show desktop" className="h-full w-[14px] border border-[#60748a] bg-[linear-gradient(135deg,#c8d8e8,#7088a0)]" />
    </div>
  </footer>
);

const Watermark: React.FC = () => (
  <div className="absolute right-0 top-[2px] z-20 flex h-[55px] w-[217px] flex-col bg-white/90 px-[3px] pt-[3px]">
    <div className="flex items-center justify-between whitespace-nowrap leading-[26px]">
      <span className="text-[20px] font-black text-[#1010f0]">股海网</span>
      <span className="text-[18px] font-bold text-[#4a3030]">股票软件资源分享</span>
    </div>
    <span className="font-['DejaVu_Sans',sans-serif] text-[19px] font-bold leading-[20px] text-[#f03800]">Www.Guhai.com.cn</span>
  </div>
);

export default function App() {
  return (
    <div className="min-h-screen w-full bg-white pr-[5px] font-['Liberation_Sans','Noto_Sans_CJK_SC',sans-serif]">
      <main className="relative flex h-[659px] overflow-hidden bg-black">
        <ChartColumn />
        <QuotePanel />
        <Toolbar />
        <Watermark />
      </main>
      <div className="flex h-[24px] items-center whitespace-nowrap border-r border-[#a0a0a0] bg-[#fafafa] pl-[617px] text-[12px] text-[#0000ff]">
        *小信教你一招，再也不用担心错过新股申购~
      </div>
      <IndexBar />
      <Taskbar />
    </div>
  );
}
